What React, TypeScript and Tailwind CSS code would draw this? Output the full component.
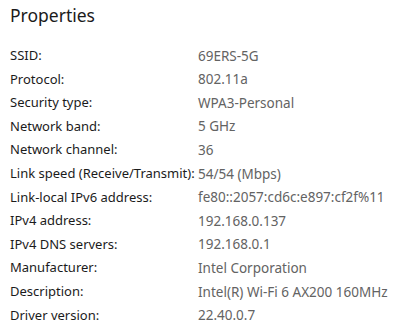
const rows: [string, string][] = [
  ["SSID:", "69ERS-5G"],
  ["Protocol:", "802.11a"],
  ["Security type:", "WPA3-Personal"],
  ["Network band:", "5 GHz"],
  ["Network channel:", "36"],
  ["Link speed (Receive/Transmit):", "54/54 (Mbps)"],
  ["Link-local IPv6 address:", "fe80::2057:cd6c:e897:cf2f%11"],
  ["IPv4 address:", "192.168.0.137"],
  ["IPv4 DNS servers:", "192.168.0.1"],
  ["Manufacturer:", "Intel Corporation"],
  ["Description:", "Intel(R) Wi-Fi 6 AX200 160MHz"],
  ["Driver version:", "22.40.0.7"],
];

export default function App() {
  return (
    <div
      className="w-[400px] h-[330px] bg-white overflow-hidden pl-[10px]"
      style={{ fontFamily: '"Noto Sans", sans-serif' }}
    >
      <h1 className="text-[17.5px] leading-[24px] pt-[3px] text-[#1b1b1b] font-normal">Properties</h1>
      <div className="mt-[17px] flex flex-col">
        {rows.map(([k, v]) => (
          <div key={k} className="flex h-[23.6px] items-center">
            <div className="w-[188px] text-[13px] text-[#1b1b1b]">{k}</div>
            <div className="text-[13.5px] text-[#636363]">{v}</div>
          </div>
        ))}
      </div>
    </div>
  );
}
